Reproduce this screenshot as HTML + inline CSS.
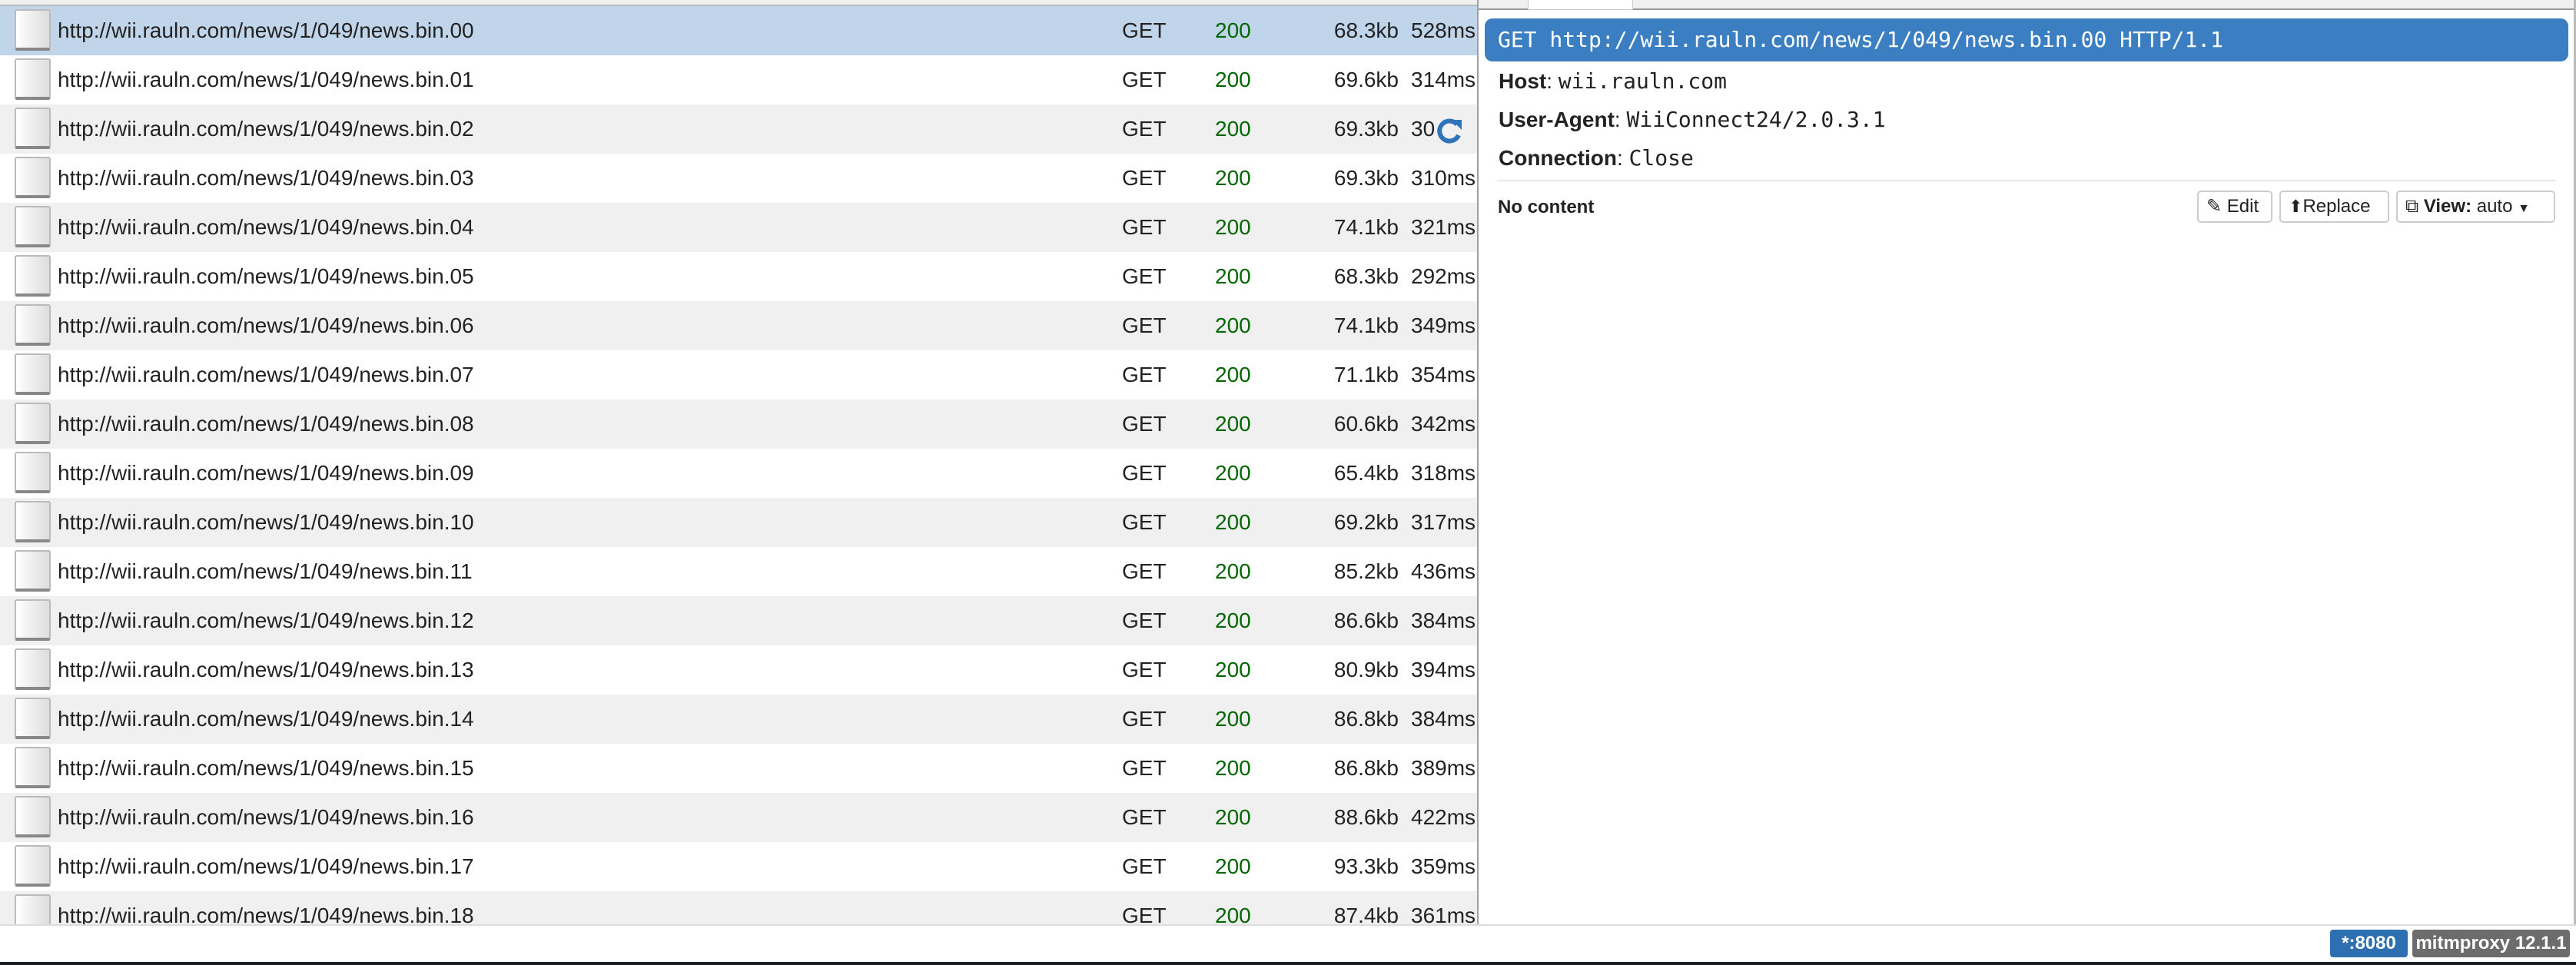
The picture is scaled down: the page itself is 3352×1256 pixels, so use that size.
<!DOCTYPE html>
<html><head><style>
*{margin:0;padding:0;box-sizing:border-box}
body{width:3352px;height:1256px;overflow:hidden;background:#fff;font-family:"Liberation Sans",Helvetica,Arial,sans-serif;color:#222;position:relative}
.a{position:absolute;white-space:nowrap}
.row{position:absolute;left:0;width:1922px;height:64px}
.chk{position:absolute;left:19px;top:4px;width:47px;height:54px;border:2px solid #bbb;border-bottom:4px solid #888;border-radius:3px;background:linear-gradient(to right,#fff,#ddd)}
.t{position:absolute;top:0;line-height:64px;font-size:28px}
.mono{font-family:"DejaVu Sans Mono","Liberation Mono",monospace}
.btn{position:absolute;top:248px;height:42px;border:2px solid #ccc;border-radius:5px;font-size:24px;line-height:38px;background:#fff;padding-left:10px}
</style></head><body>
<div class="a" style="left:0;top:0;width:1922px;height:8px;background:#f0f0f0;border-bottom:2px solid #bbb"></div>
<div id="rows"></div>
<div class="a" style="left:1922px;top:0;width:2px;height:1203px;background:#a0a0a0"></div>
<div class="a" style="left:1924px;top:0;width:1428px;height:13px;background:#f0f0f0;border-bottom:2px solid #999"></div>
<div class="a" style="left:1988px;top:0;width:137px;height:13px;background:#fff;border:1px solid #ccc;border-top:none"></div>
<div class="a" style="left:3349px;top:0;width:3px;height:1203px;background:#bbb"></div>
<div class="a mono" style="left:1932px;top:24px;width:1410px;height:56px;background:#3b7fc2;border-radius:10px;color:#fff;font-size:28px;line-height:56px;padding-left:17px">GET http://wii.rauln.com/news/1/049/news.bin.00 HTTP/1.1</div>
<div class="a" style="left:1950px;top:86px;font-size:28px;line-height:40px"><b>Host</b>: <span class="mono">wii.rauln.com</span></div>
<div class="a" style="left:1950px;top:136px;font-size:28px;line-height:40px"><b>User-Agent</b>: <span class="mono">WiiConnect24/2.0.3.1</span></div>
<div class="a" style="left:1950px;top:186px;font-size:28px;line-height:40px"><b>Connection</b>: <span class="mono">Close</span></div>
<div class="a" style="left:1948px;top:234px;width:1378px;height:2px;background:#e8e8e8"></div>
<div class="a" style="left:1949px;top:254px;font-size:24px;font-weight:bold;line-height:32px">No content</div>
<div class="btn" style="left:2859px;width:98px">✎ Edit</div>
<div class="btn" style="left:2966px;width:143px"><span style="font-size:22px">⬆</span>Replace</div>
<div class="btn" style="left:3118px;width:207px">⧉ <b>View:</b> auto <span style="font-size:16px">▼</span></div>
<div class="a" style="left:0;top:1203px;width:3352px;height:49px;background:#fff;border-top:2px solid #ddd"></div>
<div class="a" style="left:3032px;top:1210px;width:101px;height:36px;background:#2d6fb0;border-radius:4px;color:#fff;font-weight:bold;font-size:24px;line-height:36px;text-align:center">*:8080</div>
<div class="a" style="left:3139px;top:1210px;width:205px;height:36px;background:#6c6c6c;border-radius:4px;color:#fff;font-weight:bold;font-size:24px;line-height:36px;text-align:center">mitmproxy 12.1.1</div>
<div class="a" style="left:0;top:1252px;width:3352px;height:4px;background:#1a1c1e"></div>
<script>
var d=[["68.3kb","528ms"],["69.6kb","314ms"],["69.3kb","30"],["69.3kb","310ms"],["74.1kb","321ms"],["68.3kb","292ms"],["74.1kb","349ms"],["71.1kb","354ms"],["60.6kb","342ms"],["65.4kb","318ms"],["69.2kb","317ms"],["85.2kb","436ms"],["86.6kb","384ms"],["80.9kb","394ms"],["86.8kb","384ms"],["86.8kb","389ms"],["88.6kb","422ms"],["93.3kb","359ms"],["87.4kb","361ms"]];
var h="";
for(var i=0;i<19;i++){
var bg=i==0?"#c0d5ea":(i%2?"#fff":"#f0f0f0");
var n=(i<10?"0":"")+i;
h+='<div class="row" style="top:'+(8+64*i)+'px;background:'+bg+(i==18?';height:43px;overflow:hidden':'')+'"><div class="chk"></div>'+
'<div class="t" style="left:75px">http://wii.rauln.com/news/1/049/news.bin.'+n+'</div>'+
'<div class="t" style="left:1460px">GET</div>'+
'<div class="t" style="left:1581px;color:#006600">200</div>'+
'<div class="t" style="right:102px;text-align:right">'+d[i][0]+'</div>'+
'<div class="t" style="left:1836px;width:86px;overflow:hidden">'+d[i][1]+'</div>'+
(i==2?'<svg class="a" style="left:1868px;top:16px" width="36" height="36" viewBox="0 0 36 36"><path d="M28 10A13 13 0 1 0 30 24" fill="none" stroke="#2f73b8" stroke-width="6"/><path d="M21 4L34 4L34 17Z" fill="#2f73b8"/></svg>':'')+
'</div>';}
document.getElementById("rows").innerHTML=h;
</script>
</body></html>
